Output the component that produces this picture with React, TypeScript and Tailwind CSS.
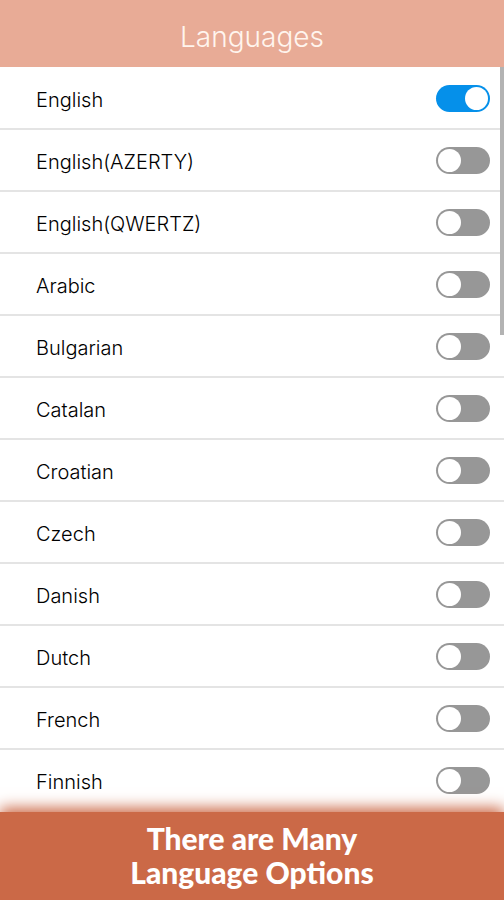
import { useState } from "react";

const languages = [
  "English",
  "English(AZERTY)",
  "English(QWERTZ)",
  "Arabic",
  "Bulgarian",
  "Catalan",
  "Croatian",
  "Czech",
  "Danish",
  "Dutch",
  "French",
  "Finnish",
];

function LanguageRow({ name, defaultOn }: { name: string; defaultOn: boolean }) {
  const [on, setOn] = useState(defaultOn);

  return (
    <li className="border-b-2 border-[#e4e4e4] last:border-transparent">
      <label className="flex h-full cursor-pointer items-center justify-between pl-9 pr-3.5">
        <span className="pt-1 text-[20px] leading-6 font-light text-black">{name}</span>
        <input
          type="checkbox"
          role="switch"
          checked={on}
          onChange={(e) => setOn(e.target.checked)}
          className="h-[27px] w-[54px] shrink-0 cursor-pointer appearance-none rounded-full bg-[#979797] p-0.5 before:block before:size-[23px] before:rounded-full before:bg-white checked:bg-[#0590ea] checked:before:ml-auto"
        />
      </label>
    </li>
  );
}

export default function App() {
  return (
    <div className="flex min-h-screen flex-col bg-white font-['Inter',sans-serif]">
      <header className="bg-[#e8ab96] pt-5 pb-[13px] text-center">
        <h1 className="text-[28px] leading-[34px] font-light text-[#fff5ee]">Languages</h1>
      </header>

      <main className="relative flex flex-1 flex-col pt-px">
        <ul className="grid flex-1 auto-rows-fr">
          {languages.map((name, i) => (
            <LanguageRow key={name} name={name} defaultOn={i === 0} />
          ))}
        </ul>
        {/* Scroll thumb */}
        <div className="absolute top-0 right-0 h-[36%] w-1 bg-[#b3b3b3]" />
      </main>

      <footer className="relative bg-[#cb6947] pt-[9px] pb-[11px] text-center shadow-[0_-4px_14px_0_#cb6947]">
        <p className="font-['Lato',sans-serif] text-[30px] leading-[34px] font-black text-white">
          There are Many
          <br />
          Language Options
        </p>
      </footer>
    </div>
  );
}
